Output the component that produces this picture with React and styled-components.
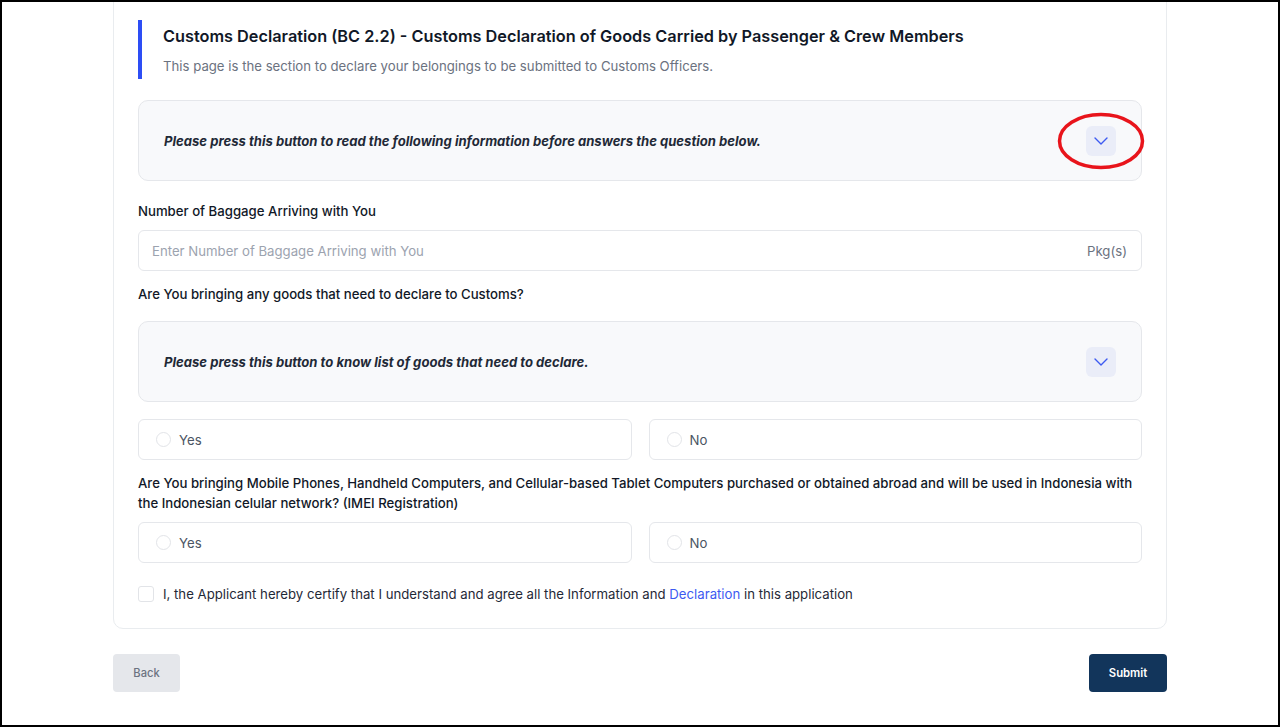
import styled, { createGlobalStyle } from "styled-components";

const GlobalStyle = createGlobalStyle`
  html, body {
    margin: 0;
    padding: 0;
    background: #ffffff;
    font-family: Inter, "Noto Sans", "Liberation Sans", sans-serif;
    color: #111827;
  }
`

function Chevron () {
  return (
    <svg width="14" height="8" viewBox="0 0 14 8" fill="none">
      <polyline points="1,1 7,7 13,1" stroke="#3d5af1" strokeWidth="1.4" strokeLinecap="round" strokeLinejoin="round" />
    </svg>
  )
}

function InfoBox ({ text, marked }) {
  return (
    <Info>
      <InfoText>{text}</InfoText>
      <ToggleWrap>
        <ToggleButton type="button"><Chevron /></ToggleButton>
        {marked && (
          <Mark width="90" height="60" viewBox="0 0 90 60">
            <ellipse cx="45" cy="30" rx="41.5" ry="26.5" fill="none" stroke="#e8141b" strokeWidth="3.5" />
          </Mark>
        )}
      </ToggleWrap>
    </Info>
  )
}

function RadioPair () {
  return (
    <RadioGrid>
      <RadioOption><RadioDot />Yes</RadioOption>
      <RadioOption><RadioDot />No</RadioOption>
    </RadioGrid>
  )
}

function App () {
  return (
    <Frame>
      <GlobalStyle />
      <Card>
        <Header>
          <Title>Customs Declaration (BC 2.2) - Customs Declaration of Goods Carried by Passenger &amp; Crew Members</Title>
          <Subtitle>This page is the section to declare your belongings to be submitted to Customs Officers.</Subtitle>
        </Header>

        <InfoBox marked text="Please press this button to read the following information before answers the question below." />

        <Label $top={20} $bottom={9}>Number of Baggage Arriving with You</Label>
        <InputBox>
          <Placeholder>Enter Number of Baggage Arriving with You</Placeholder>
          <Unit>Pkg(s)</Unit>
        </InputBox>

        <Label $top={13} $bottom={17}>Are You bringing any goods that need to declare to Customs?</Label>
        <InfoBox text="Please press this button to know list of goods that need to declare." />

        <Spacer $h={17} />
        <RadioPair />

        <Label $top={13} $bottom={9}>
          Are You bringing Mobile Phones, Handheld Computers, and Cellular-based Tablet Computers purchased or obtained abroad and will be used in Indonesia with the Indonesian celular network? (IMEI Registration)
        </Label>
        <RadioPair />

        <Agree>
          <CheckBox />
          <span>I, the Applicant hereby certify that I understand and agree all the Information and <LinkText>Declaration</LinkText> in this application</span>
        </Agree>
      </Card>

      <Actions>
        <BackButton type="button">Back</BackButton>
        <SubmitButton type="button">Submit</SubmitButton>
      </Actions>
    </Frame>
  )
}

const Frame = styled.div`
  box-sizing: border-box;
  width: 1280px;
  height: 727px;
  overflow: hidden;
  border: 2px solid #000000;
  padding: 0 111px;
`

const Card = styled.div`
  box-sizing: border-box;
  margin-top: -12px;
  padding: 29px 24px 24px 24px;
  border: 1px solid #e9ecef;
  border-radius: 10px;
  background: #ffffff;
`

const Header = styled.div`
  display: flex;
  flex-direction: column;
  gap: 8px;
  border-left: 4px solid #2d4ef5;
  padding: 4px 0 3px 21px;
  margin-bottom: 21px;
`

const Title = styled.h1`
  margin: 0;
  font-size: 16.3px;
  line-height: 24px;
  font-weight: 600;
  color: #111827;
`

const Subtitle = styled.p`
  margin: 0;
  font-size: 13.2px;
  line-height: 20px;
  color: #6b7280;
`

const Info = styled.div`
  box-sizing: border-box;
  display: flex;
  align-items: center;
  justify-content: space-between;
  height: 81px;
  padding: 0 25px;
  border: 1px solid #e5e7eb;
  border-radius: 10px;
  background: #f8f9fb;
`

const InfoText = styled.span`
  font-size: 13.1px;
  font-weight: 700;
  font-style: italic;
  color: #1f2937;
`

const ToggleWrap = styled.div`
  position: relative;
  display: flex;
`

const ToggleButton = styled.button`
  display: flex;
  align-items: center;
  justify-content: center;
  width: 30px;
  height: 30px;
  padding: 0;
  border: none;
  border-radius: 6px;
  background: #eaedf8;
  cursor: pointer;
`

const Mark = styled.svg`
  position: absolute;
  left: -30px;
  top: -15px;
  pointer-events: none;
`

const Label = styled.div`
  margin-top: ${props => props.$top}px;
  margin-bottom: ${props => props.$bottom}px;
  font-size: 13.2px;
  line-height: 20px;
  font-weight: 500;
  color: #111827;
`

const InputBox = styled.div`
  box-sizing: border-box;
  display: flex;
  align-items: center;
  justify-content: space-between;
  height: 41px;
  padding: 0 14px 0 13px;
  border: 1px solid #e5e7eb;
  border-radius: 6px;
  font-size: 13.2px;
`

const Placeholder = styled.span`
  color: #9ca3af;
`

const Unit = styled.span`
  color: #6b7280;
`

const Spacer = styled.div`
  height: ${props => props.$h}px;
`

const RadioGrid = styled.div`
  display: grid;
  grid-template-columns: 1fr 1fr;
  gap: 17px;
`

const RadioOption = styled.label`
  box-sizing: border-box;
  display: flex;
  align-items: center;
  gap: 8px;
  height: 41px;
  padding: 0 17px;
  border: 1px solid #e5e7eb;
  border-radius: 6px;
  font-size: 13.2px;
  color: #4b5563;
`

const RadioDot = styled.span`
  box-sizing: border-box;
  width: 15px;
  height: 15px;
  border: 1px solid #e2e4e8;
  border-radius: 50%;
  background: #ffffff;
`

const Agree = styled.div`
  display: flex;
  align-items: center;
  gap: 9px;
  margin-top: 21px;
  font-size: 13.2px;
  line-height: 20px;
  color: #1f2937;
`

const CheckBox = styled.span`
  box-sizing: border-box;
  width: 16px;
  height: 16px;
  border: 1px solid #e2e4e8;
  border-radius: 3px;
`

const LinkText = styled.a`
  color: #3d5af1;
  text-decoration: none;
`

const Actions = styled.div`
  display: flex;
  justify-content: space-between;
  margin-top: 25px;
`

const BackButton = styled.button`
  width: 67px;
  height: 38px;
  border: none;
  border-radius: 4px;
  background: #e5e7eb;
  font-family: inherit;
  font-size: 11.2px;
  font-weight: 500;
  color: #6b7280;
  cursor: pointer;
`

const SubmitButton = styled.button`
  width: 78px;
  height: 38px;
  border: none;
  border-radius: 4px;
  background: #12355b;
  font-family: inherit;
  font-size: 11.3px;
  font-weight: 600;
  color: #ffffff;
  cursor: pointer;
`

export default App;
